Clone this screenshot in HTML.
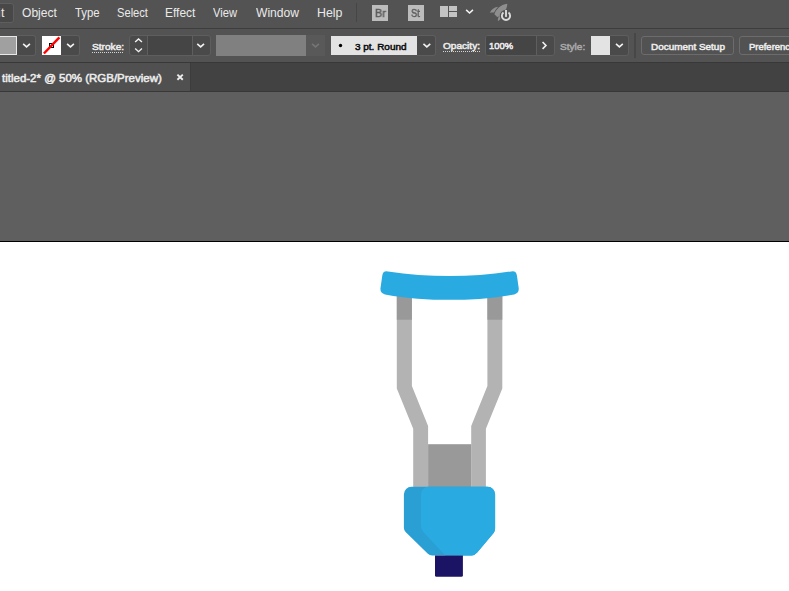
<!DOCTYPE html>
<html><head><meta charset="utf-8">
<style>
html,body{margin:0;padding:0;}
body{width:789px;height:591px;overflow:hidden;background:#fff;font-family:"Liberation Sans",sans-serif;position:relative;}
.abs{position:absolute;}
#menubar{left:0;top:0;width:789px;height:28px;background:#535353;}
#ctrlbar{left:0;top:28px;width:789px;height:34px;background:#535353;border-top:1px solid #3d3d3d;box-sizing:border-box;}
#tabbar{left:0;top:62px;width:789px;height:30px;background:#424242;border-top:1px solid #383838;border-bottom:1px solid #383838;box-sizing:border-box;}
#tab{left:0;top:63px;width:190px;height:28px;background:#505050;}
#tabedge{left:190px;top:63px;width:1px;height:28px;background:#3c3c3c;}
#canvas{left:0;top:92px;width:789px;height:149px;background:#5f5f5f;}
#edge{left:0;top:241px;width:789px;height:1px;background:#000;}
.tx{position:absolute;white-space:nowrap;transform-origin:0 0;}
.u{position:absolute;height:1px;background:repeating-linear-gradient(90deg,#d4d4d4 0,#d4d4d4 1px,transparent 1px,transparent 2px);}
.box{position:absolute;box-sizing:border-box;border:1px solid #5e5e5e;background:#4a4a4a;top:35px;height:21px;}
</style></head><body>
<div class="abs" id="menubar"></div>
<div class="abs" id="ctrlbar"></div>
<div class="abs" id="tabbar"></div>
<div class="abs" id="tab"></div>
<div class="abs" id="tabedge"></div>
<div class="abs" id="canvas"></div>
<div class="abs" id="edge"></div>

<!-- menu -->
<div class="abs" style="left:-5px;top:3px;width:19px;height:20px;box-sizing:border-box;background:#484848;border:1px solid #5e5e5e;border-radius:3px;"></div>
<div class="abs" style="left:356px;top:3px;width:1px;height:19px;background:#464646;"></div>
<div class="abs" style="left:372px;top:5px;width:16px;height:16px;background:#bcbcbc;"></div>
<div class="abs" style="left:408px;top:5px;width:16px;height:16px;background:#bcbcbc;"></div>

<!-- control bar boxes -->
<div class="abs" style="left:-2px;top:36px;width:19px;height:19px;box-sizing:border-box;background:#a0a0a0;border:1px solid #e8e8e8;"></div>
<div class="box" style="left:17px;width:19px;top:35px;height:21px;border-left:none;border-radius:0 3px 3px 0;"></div>
<div class="abs" style="left:42px;top:36px;width:19px;height:19px;background:#fff;"></div>
<div class="box" style="left:61px;width:19px;top:35px;height:21px;border-left:none;border-radius:0 3px 3px 0;"></div>

<div class="u" style="left:92px;top:52px;width:31px;"></div>
<div class="box" style="left:129px;width:82px;border-radius:3px;"></div>
<div class="abs" style="left:147px;top:36px;width:46px;height:19px;background:#454545;border-left:1px solid #5e5e5e;border-right:1px solid #5e5e5e;box-sizing:border-box;"></div>


<div class="abs" style="left:216px;top:35px;width:90px;height:21px;background:#808080;"></div>
<div class="abs" style="left:306px;top:35px;width:19px;height:21px;background:#595959;"></div>

<div class="abs" style="left:331px;top:36px;width:86px;height:19px;background:#e3e3e3;"></div>
<div class="box" style="left:417px;width:19px;top:35px;height:21px;border-left:none;border-radius:0 3px 3px 0;"></div>

<div class="u" style="left:443px;top:51px;width:37px;"></div>
<div class="box" style="left:485px;width:70px;border-radius:3px;"></div>
<div class="abs" style="left:486px;top:36px;width:51px;height:19px;background:#454545;border-right:1px solid #5e5e5e;box-sizing:border-box;border-radius:2px 0 0 2px;"></div>

<div class="abs" style="left:591px;top:36px;width:19px;height:19px;background:#e3e3e3;"></div>
<div class="box" style="left:610px;width:19px;top:35px;height:21px;border-left:none;border-radius:0 3px 3px 0;"></div>
<div class="abs" style="left:634px;top:33px;width:2px;height:25px;background:#474747;"></div>

<div class="box" style="left:641px;width:93px;top:36px;height:19px;border-radius:3px;background:#525252;border-color:#6c6c6c;"></div>
<div class="box" style="left:739px;width:70px;top:36px;height:19px;border-radius:3px;background:#525252;border-color:#6c6c6c;"></div>

<div class="tx" style="left:1.40px;top:4.50px;font-size:13px;line-height:16px;color:#eaeaea;font-weight:normal;transform:scaleX(0.9500);">t</div>
<div class="tx" style="left:-0.70px;top:4.50px;font-size:13px;line-height:16px;color:#eaeaea;font-weight:normal;transform:scaleX(0.4000);">i</div>
<div class="tx" style="left:22.00px;top:4.50px;font-size:13px;line-height:16px;color:#eaeaea;font-weight:normal;transform:scaleX(0.9273);">Object</div>
<div class="tx" style="left:74.80px;top:4.50px;font-size:13px;line-height:16px;color:#eaeaea;font-weight:normal;transform:scaleX(0.8729);">Type</div>
<div class="tx" style="left:117.00px;top:4.50px;font-size:13px;line-height:16px;color:#eaeaea;font-weight:normal;transform:scaleX(0.8571);">Select</div>
<div class="tx" style="left:165.48px;top:4.50px;font-size:13px;line-height:16px;color:#eaeaea;font-weight:normal;transform:scaleX(0.9200);">Effect</div>
<div class="tx" style="left:213.20px;top:4.50px;font-size:13px;line-height:16px;color:#eaeaea;font-weight:normal;transform:scaleX(0.8580);">View</div>
<div class="tx" style="left:256.30px;top:4.50px;font-size:13px;line-height:16px;color:#eaeaea;font-weight:normal;transform:scaleX(0.9307);">Window</div>
<div class="tx" style="left:316.75px;top:4.50px;font-size:13px;line-height:16px;color:#eaeaea;font-weight:normal;transform:scaleX(0.9527);">Help</div>
<div class="tx" style="left:374.90px;top:5.77px;font-size:11.5px;line-height:14.5px;color:#5c5c5c;font-weight:normal;transform:scaleX(0.9426);-webkit-text-stroke:0.5px #5c5c5c;will-change:transform;">Br</div>
<div class="tx" style="left:410.80px;top:5.77px;font-size:11.5px;line-height:14.5px;color:#5c5c5c;font-weight:normal;transform:scaleX(0.8055);-webkit-text-stroke:0.5px #5c5c5c;will-change:transform;">St</div>
<div class="tx" style="left:91.80px;top:40.86px;font-size:9.5px;line-height:12.5px;color:#ededed;font-weight:normal;transform:scaleX(1.0660);-webkit-text-stroke:0.5px #ededed;">Stroke:</div>
<div class="tx" style="left:355.00px;top:40.86px;font-size:9.5px;line-height:12.5px;color:#0c0c0c;font-weight:normal;transform:scaleX(1.0484);-webkit-text-stroke:0.5px #0c0c0c;">3 pt. Round</div>
<div class="tx" style="left:443.00px;top:39.86px;font-size:9.5px;line-height:12.5px;color:#ededed;font-weight:normal;transform:scaleX(1.0612);-webkit-text-stroke:0.5px #ededed;">Opacity:</div>
<div class="tx" style="left:489.40px;top:39.86px;font-size:9.5px;line-height:12.5px;color:#ededed;font-weight:normal;transform:scaleX(0.9899);-webkit-text-stroke:0.5px #ededed;">100%</div>
<div class="tx" style="left:559.90px;top:40.86px;font-size:9.5px;line-height:12.5px;color:#a9a9a9;font-weight:normal;transform:scaleX(1.0597);-webkit-text-stroke:0.5px #a9a9a9;">Style:</div>
<div class="tx" style="left:650.80px;top:40.86px;font-size:9.5px;line-height:12.5px;color:#ededed;font-weight:normal;transform:scaleX(1.0443);-webkit-text-stroke:0.5px #ededed;">Document Setup</div>
<div class="tx" style="left:748.70px;top:40.86px;font-size:9.5px;line-height:12.5px;color:#ededed;font-weight:normal;transform:scaleX(0.9967);-webkit-text-stroke:0.5px #ededed;">Preferences</div>
<div class="tx" style="left:1.60px;top:71.19px;font-size:11px;line-height:14px;color:#ededed;font-weight:normal;transform:scaleX(1.0445);-webkit-text-stroke:0.5px #ededed;">titled-2* @ 50% (RGB/Preview)</div>
<div class="tx" style="left:-6.60px;top:71.19px;font-size:11px;line-height:14px;color:#ededed;font-weight:normal;transform:scaleX(1.1167);-webkit-text-stroke:0.5px #ededed;">n</div>

<svg class="abs" style="left:0;top:0" width="789" height="591" viewBox="0 0 789 591">
<!-- chevrons -->
<g fill="none" stroke="#f2f2f2" stroke-width="1.6" stroke-linecap="butt" stroke-linejoin="miter">
<path d="M23.15 43.85 L26.55 46.90 L29.95 43.85"/>
<path d="M67.10 43.85 L70.50 46.90 L73.90 43.85"/>
<path d="M135.15 42.10 L138.55 39.05 L141.95 42.10" stroke-width="1.4"/>
<path d="M135.15 48.60 L138.55 51.65 L141.95 48.60" stroke-width="1.4"/>
<path d="M197.25 43.85 L200.65 46.90 L204.05 43.85"/>
<path d="M423.45 43.85 L426.85 46.90 L430.25 43.85"/>
<path d="M616.00 43.85 L619.40 46.90 L622.80 43.85"/>
<path d="M542.57 41.97 L545.97 45.45 L542.57 48.93"/>
<path d="M466.15 9.95 L469.55 13.00 L472.95 9.95"/>
</g>
<g fill="none" stroke="#757575" stroke-width="1.6"><path d="M312.10 43.85 L315.50 46.90 L318.90 43.85"/></g>
<!-- brush dot -->
<circle cx="340.5" cy="45.5" r="1.7" fill="#000"/>
<!-- none swatch -->
<rect x="49.5" y="43.5" width="4" height="4" fill="#fff" stroke="#000" stroke-width="1"/>
<path d="M43.9 53.5 L59.4 37.3" stroke="#f00" stroke-width="2.4" fill="none"/>
<!-- layout icon -->
<rect x="440" y="6" width="8" height="11" fill="#c3c3c3"/>
<rect x="449" y="6" width="8" height="5" fill="#c3c3c3"/>
<rect x="449" y="12" width="8" height="5" fill="#c3c3c3"/>
<!-- rocket -->
<g fill="#8e8e8e">
<path d="M507.3 3.7 C500.5 4.6 495.6 9.6 494.4 14.2 L497.2 17.1 C502.6 15.6 507.2 10 507.3 3.7 Z"/>
<path d="M489.8 12.8 C491.6 9.2 494.8 7.2 498.2 6.8 C496.4 8.6 495 10.6 494 12.6 C492.6 12.4 491.2 12.5 489.8 12.8 Z"/>
<path d="M497.9 21.2 C497.6 19 498.3 17 499.9 15.8 L501.2 17.4 C500.4 19 499.2 20.4 497.9 21.2 Z"/>
</g>
<circle cx="506" cy="15.9" r="6.2" fill="#535353"/>
<path d="M503.5 12.6 A4.1 4.1 0 1 0 508.5 12.6" fill="none" stroke="#dadada" stroke-width="1.9"/>
<rect x="505.05" y="10" width="1.9" height="6.9" fill="#dadada"/>
<!-- tab close -->
<path d="M177.4 74.6 l5.4 5.2 M182.8 74.6 l-5.4 5.2" stroke="#ececec" stroke-width="1.9" fill="none"/>

<!-- crutch -->
<g id="crutch">
<path d="M396.8 290 L411.9 290 L411.9 386.1 L428.1 426.1 L428.1 490 L413.2 490 L413.2 428.8 L396.8 388.5 Z" fill="#b3b3b3"/>
<path d="M502.3 290 L487.4 290 L487.4 386.1 L471.2 426.1 L471.2 490 L485.9 490 L485.9 428.8 L502.3 388.5 Z" fill="#b3b3b3"/>
<rect x="396.8" y="290" width="15.1" height="29.7" fill="#999"/>
<rect x="487.4" y="290" width="14.9" height="29.7" fill="#999"/>
<rect x="428.1" y="444.2" width="43.1" height="46" fill="#999"/>
<path d="M388 271.4 C408 274.7 429 276 449.6 276 C470.2 276 491.2 274.7 511.2 271.4 Q516.3 270.4 516.9 275.6 L518.7 288 Q519.3 293.2 514.2 294.4 C492 298.6 471 299.8 449.6 299.8 C428.2 299.8 407.2 298.6 385 294.4 Q379.9 293.2 380.5 288 L382.3 275.6 Q382.9 270.4 388 271.4 Z" fill="#29abe2"/>
<path d="M411.4 486.8 L487.6 486.8 A7.5 7.5 0 0 1 495.1 494.3 L495.1 528.6 Q495.1 531.3 493.4 533.3 L477.2 552.6 Q474.8 555.4 471.8 555.4 L432.2 555.4 Q429.6 555.4 427.6 553.5 L405.6 532.1 Q403.9 530.4 403.9 527.8 L403.9 494.3 A7.5 7.5 0 0 1 411.4 486.8 Z" fill="#2a9fd4"/>
<path d="M428.2 486.8 L487.6 486.8 A7.5 7.5 0 0 1 495.1 494.3 L495.1 528.6 Q495.1 531.3 493.4 533.3 L477.2 552.6 Q474.8 555.4 471.8 555.4 L445.3 555.4 L423.2 531.8 Q421 529.4 421 526.2 L421 494 A7.2 7.2 0 0 1 428.2 486.8 Z" fill="#29abe2"/>
<path d="M435 555.4 L462.9 555.4 L462.9 575.3 Q462.9 576.8 461.4 576.8 L436.5 576.8 Q435 576.8 435 575.3 Z" fill="#1b1464"/>
</g>
</svg>
</body></html>
